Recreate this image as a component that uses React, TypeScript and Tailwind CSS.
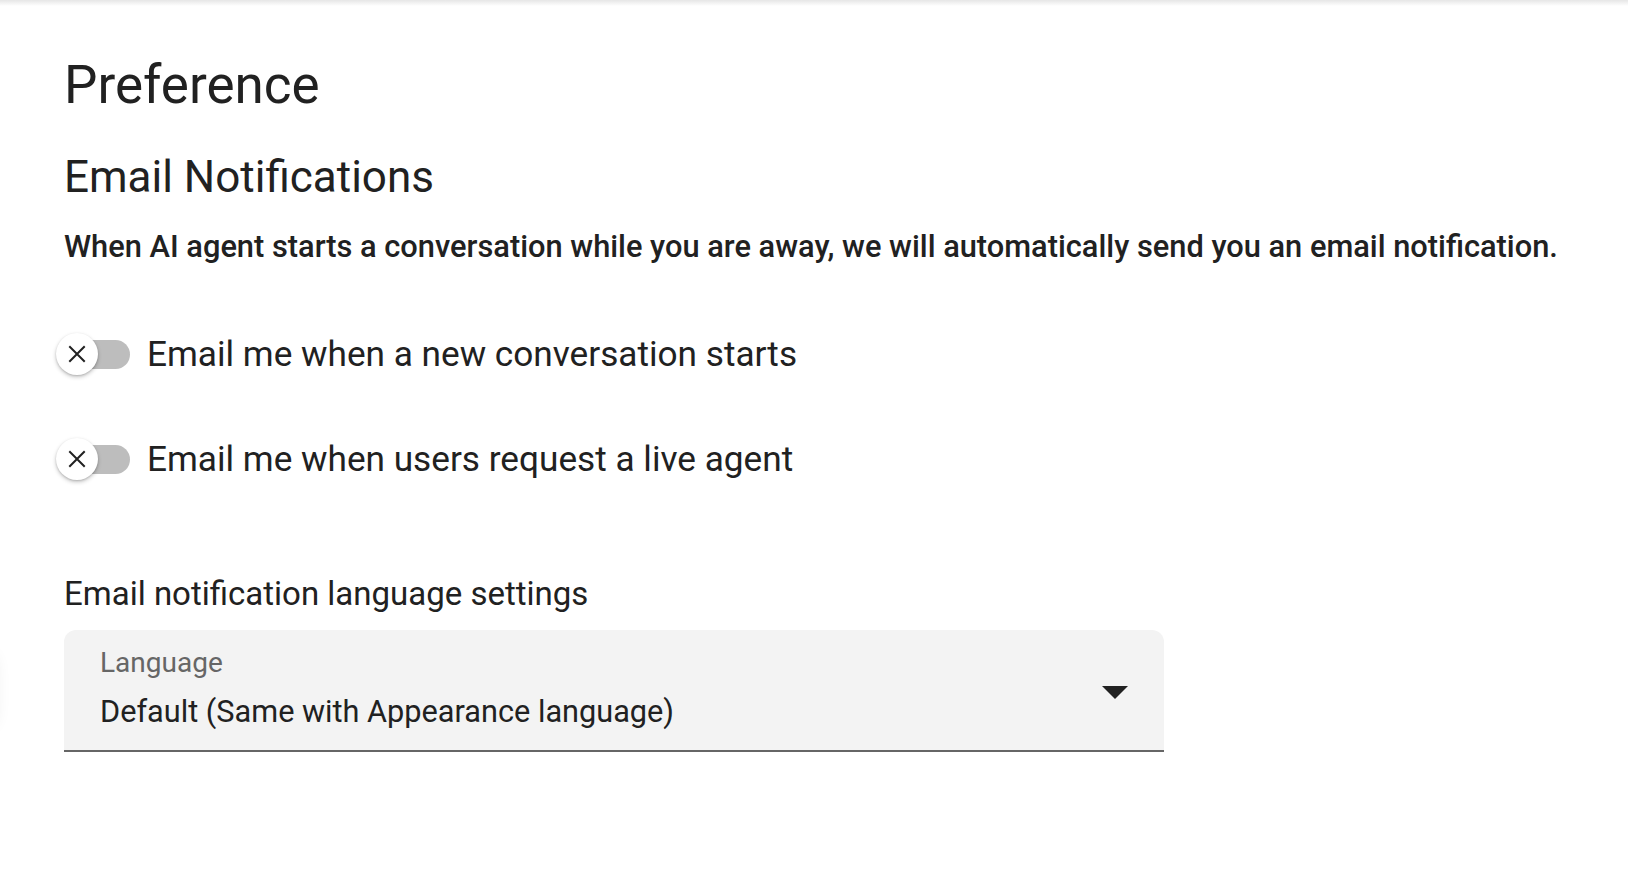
import React from "react";

function Toggle() {
  return (
    <div className="relative w-[72px] h-[48px] flex items-center shrink-0">
      <div className="absolute left-[14px] w-[52px] h-[29px] rounded-full bg-[#bdbdbd]" />
      <div className="absolute left-[-8px] w-[42px] h-[42px] rounded-full bg-white shadow-[0_2px_4px_rgba(0,0,0,0.22),0_1px_2px_rgba(0,0,0,0.14)] flex items-center justify-center">
        <svg width="20" height="20" viewBox="0 0 20 20">
          <path d="M3 3 L17 17 M17 3 L3 17" stroke="#212121" strokeWidth="2" strokeLinecap="square" fill="none" />
        </svg>
      </div>
    </div>
  );
}

export default function App() {
  return (
    <div className="relative w-[1628px] h-[894px] bg-white overflow-hidden text-[#212121]" style={{ fontFamily: "Roboto, 'Noto Sans', sans-serif" }}>
      <div className="h-[6px] bg-gradient-to-b from-[#e6e6e6] to-white" />
      <div className="absolute left-[-40px] top-[650px] w-[36px] h-[80px] rounded-full shadow-[0_0_16px_rgba(0,0,0,0.08)] bg-white" />
      <div className="flex flex-col pl-[64px]">
        <h1 className="mt-[47px] h-[64px] leading-[64px] text-[53px] font-normal">Preference</h1>
        <h2 className="mt-[34px] h-[52px] leading-[52px] text-[44px] font-normal">Email Notifications</h2>
        <p className="mt-[26px] h-[36px] leading-[36px] text-[30.8px] font-medium whitespace-nowrap">
          When AI agent starts a conversation while you are away, we will automatically send you an email notification.
        </p>
        <div className="mt-[65px] h-[48px] flex items-center">
          <Toggle />
          <span className="ml-[11px] text-[35.2px] leading-[48px]">Email me when a new conversation starts</span>
        </div>
        <div className="mt-[57px] h-[48px] flex items-center">
          <Toggle />
          <span className="ml-[11px] text-[35.2px] leading-[48px]">Email me when users request a live agent</span>
        </div>
        <div className="mt-[91px] h-[40px] leading-[40px] text-[33px]">Email notification language settings</div>
        <div className="mt-[16px] w-[1100px] h-[122px] bg-[#f3f3f3] rounded-t-[12px] border-b-2 border-[#666666] flex items-center pl-[36px] pr-[36px]">
          <div className="flex-1 flex flex-col mt-[-6px]">
            <span className="text-[28px] leading-[32px] text-[#666666]">Language</span>
            <span className="mt-[17px] text-[30.7px] leading-[32px] text-[#212121]">Default (Same with Appearance language)</span>
          </div>
          <svg width="26" height="14" viewBox="0 0 26 14" className="mt-[6px]">
            <path d="M0 0 L26 0 L13 13 Z" fill="#212121" />
          </svg>
        </div>
      </div>
    </div>
  );
}
